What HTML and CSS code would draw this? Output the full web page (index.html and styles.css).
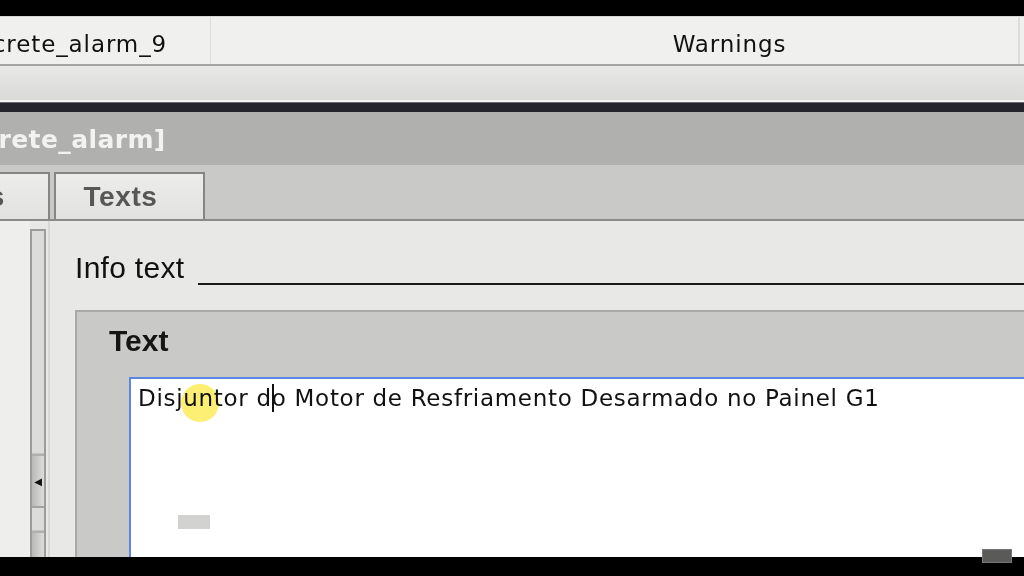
FILE: index.html
```html
<!DOCTYPE html>
<html lang="pt">
<head>
    <meta charset="UTF-8">
    <title>Discrete_alarm_9 - Texts</title>
    <link rel="stylesheet" href="styles.css">
</head>
<body>
    <div class="topbar"></div>

    <!-- linha da tabela de alarmes -->
    <div class="alarm-row">
        <div class="cell cell-name">Discrete_alarm_9</div>
        <div class="cell cell-class">Warnings</div>
    </div>
    <div class="alarm-empty"></div>

    <div class="splitter"></div>

    <!-- janela de propriedades -->
    <div class="inspector-title">[Discrete_alarm]</div>
    <div class="tabs">
        <div class="tab tab-cut">Events</div>
        <div class="tab">Texts</div>
    </div>

    <div class="content">
        <div class="nav-pane"></div>
        <div class="scrollbar">
            <div class="scroll-track"></div>
            <div class="scroll-btn"><span class="arrow">&#9664;</span></div>
            <div class="scroll-track small"></div>
            <div class="scroll-btn"></div>
        </div>
        <div class="main">
            <div class="info-row">
                <span class="info-label">Info text</span>
                <span class="info-line"></span>
            </div>
            <div class="group">
                <div class="group-title">Text</div>
                <div class="editor">
                    <div class="editor-text">Disjuntor d<span class="caret"></span>o Motor de Resfriamento Desarmado no Painel G1</div>
                    <span class="highlight"></span>
                    <div class="grip"></div>
                </div>
            </div>
        </div>
    </div>

    <div class="bottombar">
        <span class="badge"></span>
    </div>
</body>
</html>
```

FILE: styles.css
```css
body {
    margin: 0;
    padding: 0;
    width: 1024px;
    height: 576px;
    overflow: hidden;
    background: #000;
    font-family: "DejaVu Sans", Verdana, sans-serif;
    color: #111;
}

.topbar {
    height: 16px;
    background: #000;
}

/* linha da tabela */
.alarm-row {
    display: flex;
    height: 47px;
    background: #f0f0ee;
    border-bottom: 2px solid #a4a4a2;
    border-top: 1px solid #d8d8d6;
    font-size: 23px;
    letter-spacing: 0.9px;
}
.cell {
    display: flex;
    align-items: center;
    padding-top: 6px;
    box-sizing: border-box;
    overflow: hidden;
    white-space: nowrap;
}
.cell-name {
    width: 211px;
    border-right: 1px solid #dcdcda;
    text-indent: -46px;
}
.cell-class {
    flex: 1;
    justify-content: center;
    padding-left: 230px;
    border-right: 2px solid #dcdcda;
    margin-right: 4px;
}
.alarm-empty {
    height: 34px;
    background: linear-gradient(#e8e8e6, #dadad8);
    border-bottom: 2px solid #f4f4f2;
}

.splitter {
    height: 10px;
    background: #24242c;
    border-top: 1px solid #6a6a70;
    box-sizing: border-box;
}

/* titulo do inspector */
.inspector-title {
    height: 53px;
    background: #b0b1ae;
    color: #f2f2f0;
    font-size: 25px;
    font-weight: bold;
    letter-spacing: 0.4px;
    line-height: 56px;
    text-indent: -74px;
    white-space: nowrap;
    overflow: hidden;
}

.tabs {
    display: flex;
    align-items: flex-end;
    gap: 4px;
    height: 54px;
    background: #c9cac7;
    border-bottom: 2px solid #8a8a88;
    overflow: hidden;
}
.tab {
    width: 147px;
    height: 45px;
    flex-shrink: 0;
    background: linear-gradient(#ecedeb, #e2e3e0);
    border: 2px solid #858583;
    border-bottom: none;
    color: #575757;
    font-family: "Liberation Sans", Arial, sans-serif;
    font-size: 28px;
    font-weight: bold;
    letter-spacing: 0.6px;
    text-align: center;
    line-height: 45px;
}
.tab.tab-cut {
    margin-left: -101px;
    text-align: right;
    box-sizing: border-box;
    width: 151px;
    height: 47px;
    padding-right: 43px;
}
.tab:last-child {
    width: 129px;
    padding-right: 18px;
}

/* area de conteudo */
.content {
    display: flex;
    height: 336px;
    background: #e8e9e6;
}
.nav-pane {
    width: 30px;
    background: #eeefed;
}
.scrollbar {
    width: 12px;
    margin-top: 8px;
    border: 2px solid #9c9c9a;
    border-bottom: none;
    display: flex;
    flex-direction: column;
    background: #dcdcda;
    overflow: hidden;
}
.scroll-track {
    height: 222px;
    flex-shrink: 0;
    border-bottom: 1px solid #c4c4c2;
}
.scroll-track.small {
    height: 22px;
    border-top: 2px solid #a4a4a2;
}
.scroll-btn {
    height: 50px;
    flex-shrink: 0;
    background: linear-gradient(90deg, #b8b8b6, #dedede);
    display: flex;
    align-items: center;
    justify-content: center;
    border-top: 2px solid #b0b0ae;
}
.scroll-btn .arrow {
    font-size: 10px;
    color: #111;
}
.main {
    flex: 1;
    margin-left: 2px;
    border-left: 2px solid #d8d8d6;
    padding-left: 25px;
    display: flex;
    flex-direction: column;
}
.info-row {
    display: flex;
    align-items: flex-end;
    height: 64px;
    gap: 14px;
}
.info-label {
    font-family: "Liberation Sans", Arial, sans-serif;
    font-size: 30px;
    letter-spacing: 0.3px;
    white-space: nowrap;
    line-height: 34px;
}
.info-line {
    flex: 1;
    border-bottom: 2px solid #1a1a1a;
    margin-bottom: 0;
}

.group {
    flex: 1;
    margin-top: 25px;
    background: #c9cac7;
    border-top: 2px solid #a9a9a7;
    border-left: 2px solid #a9a9a7;
    padding-left: 32px;
    display: flex;
    flex-direction: column;
}
.group-title {
    font-family: "Liberation Sans", Arial, sans-serif;
    font-size: 30px;
    font-weight: bold;
    height: 65px;
    line-height: 58px;
    color: #151515;
}
.editor {
    position: relative;
    flex: 1;
    margin-left: 20px;
    background: #fff;
    border: 2px solid #5a87e4;
    border-right: none;
    border-bottom: none;
}
.editor-text {
    padding: 5px 0 0 7px;
    font-size: 23px;
    letter-spacing: 0.7px;
    white-space: nowrap;
    color: #111;
}
.caret {
    display: inline-block;
    width: 2px;
    height: 28px;
    margin: 0 -2px -6px 0;
    background: #111;
    vertical-align: baseline;
}
.highlight {
    position: absolute;
    left: 50px;
    top: 5px;
    width: 38px;
    height: 38px;
    border-radius: 50%;
    background: rgba(252, 232, 70, 0.75);
    mix-blend-mode: multiply;
}
.grip {
    position: absolute;
    left: 47px;
    top: 136px;
    width: 32px;
    height: 14px;
    background: #d2d2d0;
}

.bottombar {
    position: relative;
    height: 18px;
    background: #000;
}
.badge {
    position: absolute;
    right: 12px;
    top: -8px;
    width: 28px;
    height: 12px;
    background: #5a5a58;
    border: 1px solid #777;
}
```
